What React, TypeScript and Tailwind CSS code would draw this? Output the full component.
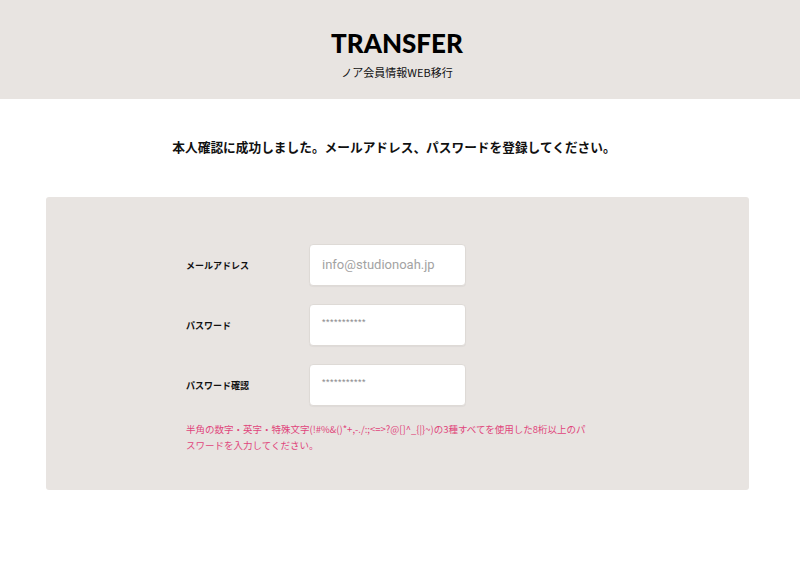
const jp = "font-['Noto_Sans_CJK_JP','Noto_Sans',sans-serif]";

const note =
  '半角の数字・英字・特殊文字(!#%&()*+,-./:;<=>?@[]^_{|}~)の3種すべてを使用した8桁以上のパスワードを入力してください。';

function Field({ label, placeholder, mask }: { label: string; placeholder: string; mask?: boolean }) {
  return (
    <div className="flex items-center">
      <label className="w-[123px] pt-[2px] text-[9px] font-bold text-[#111]">{label}</label>
      <div className="flex h-[42px] w-[157px] items-center rounded-[4px] border border-[#dedad6] bg-white px-3 shadow-[0_1px_1px_rgba(0,0,0,0.04)]">
        {mask ? (
          <span className="-mt-1 text-[9px] tracking-[0.5px] text-[#888] font-['Liberation_Sans',sans-serif]">{placeholder}</span>
        ) : (
          <span className="text-[13px] text-[#a3a3a3] font-['Roboto',sans-serif]">{placeholder}</span>
        )}
      </div>
    </div>
  );
}

export default function App() {
  return (
    <div className={`min-h-[564px] bg-white ${jp}`}>
      <header className="flex h-[99px] flex-col items-center bg-[#e8e4e1] pt-[28px] pr-[6px]">
        <h1 className="text-[26px] leading-[30px] font-black text-black font-['Lato',sans-serif]">TRANSFER</h1>
        <p className="mt-[6px] text-[11px] text-[#111]">ノア会員情報WEB移行</p>
      </header>

      <p className="mt-[37px] pr-[12px] text-center text-[12.7px] leading-[22px] font-bold text-[#111]">
        本人確認に成功しました。メールアドレス、パスワードを登録してください。
      </p>

      <section className="mt-[39px] ml-[46px] h-[293px] w-[703px] rounded-[3px] bg-[#e8e4e1] pl-[140px] pt-[47px]">
        <div className="flex flex-col gap-[18px]">
          <Field label="メールアドレス" placeholder="info@studionoah.jp" />
          <Field label="パスワード" placeholder="***********" mask />
          <Field label="パスワード確認" placeholder="***********" mask />
        </div>
        <p className="mt-[15px] w-[405px] text-[9.5px] leading-[16px] text-[#e0457b]">{note}</p>
      </section>
    </div>
  );
}
